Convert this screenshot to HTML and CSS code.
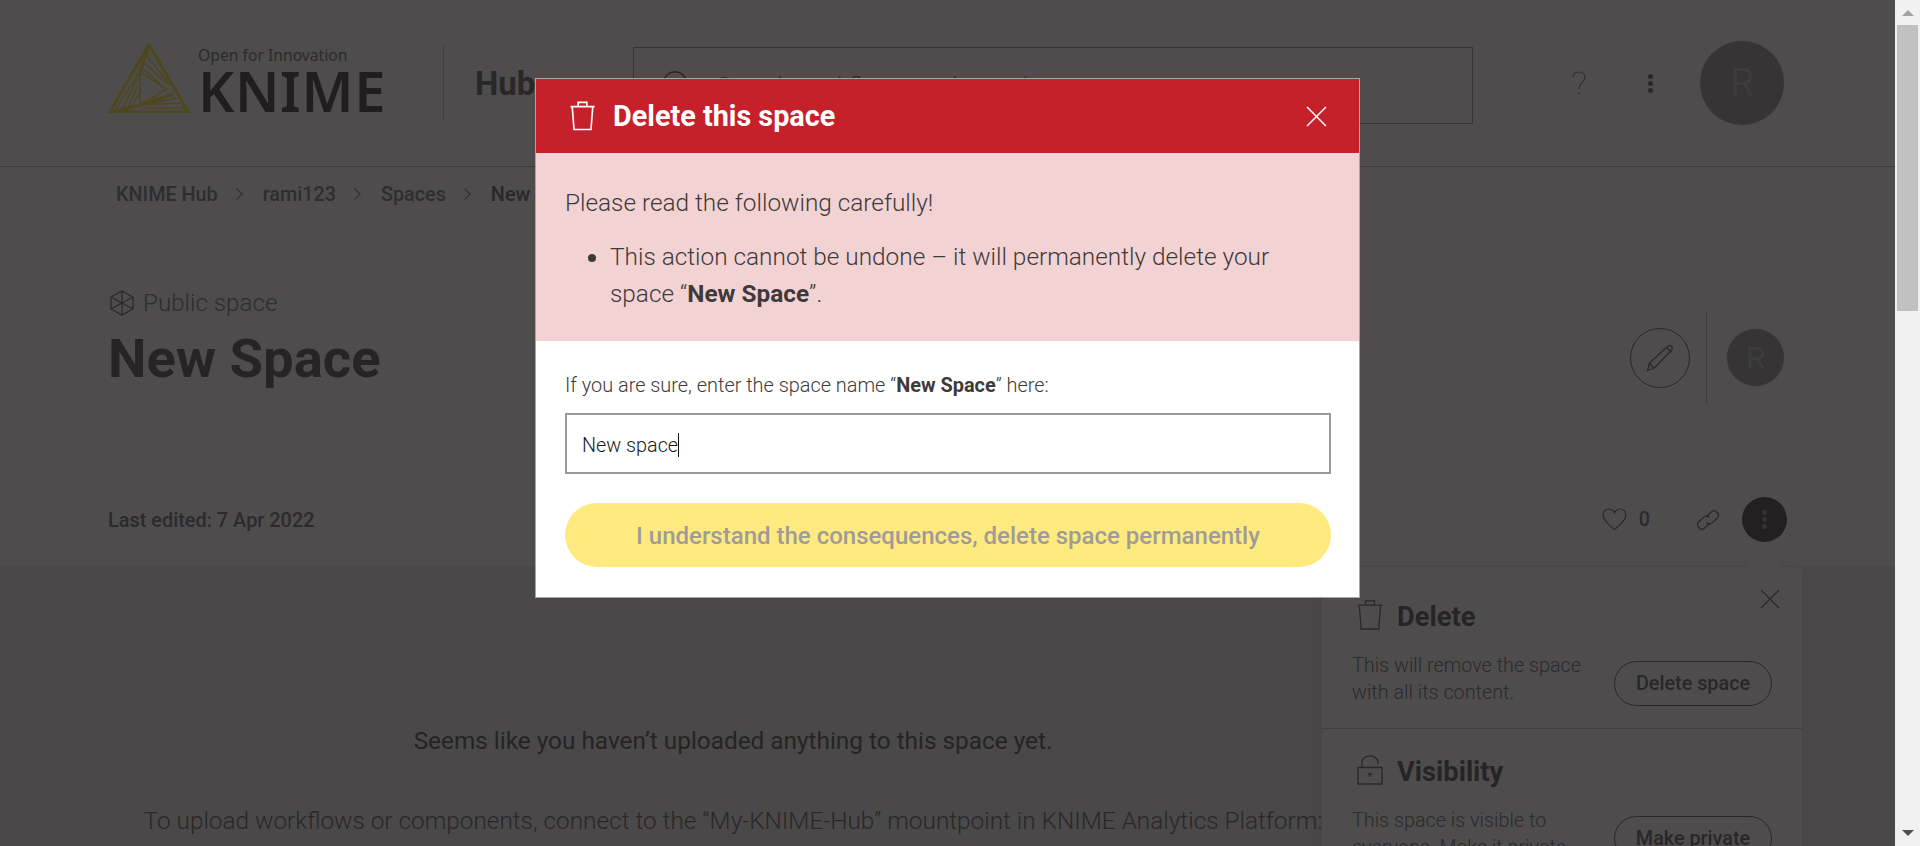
FILE: index.html
```html
<!DOCTYPE html>
<html lang="en">
<head>
<meta charset="utf-8">
<title>New Space – KNIME Hub</title>
<link rel="stylesheet" href="styles.css">
</head>
<body>
<div class="app">
  <div class="page">
    <header class="topbar">
      <div class="logo">
        <svg class="logo-mark" viewBox="0 0 82 70" fill="none">
          <g class="logo-lines">
            <path class="logo-frame" d="M41 1.500 1.800 69h78.400z"/>
            <path class="logo-frame" d="M41 1.500 32 29M5 69 32 62 66 51"/>
            <path d="M32 29 59 46 32 62zM31 30 6 69M29 36 13 69M29 44 18 69M31 50 23 66M38 12 63 43M36 19 59 41M34 25 53 42M33 62 69 55M33 62 73 60M34 65 76 65"/>
          </g>
        </svg>
        <div class="logo-text">
          <span class="logo-tag">Open for Innovation</span>
          <span class="logo-name">KNIME</span>
        </div>
      </div>
      <span class="top-divider"></span>
      <span class="hub">Hub</span>
      <div class="search">
        <svg class="search-icon" viewBox="0 0 30 30" fill="none"><circle cx="12" cy="12" r="11.300"/><path d="m20 20 9 9"/></svg>
        <span class="search-text">Search workflows, nodes and more…</span>
      </div>
      <svg class="help" viewBox="0 0 14 24" fill="none"><path d="M1 6.500C1 3 3.500 1 7 1s6 2.200 6 5.500c0 2.400-1.300 3.700-3 5.300-1.800 1.700-2.900 3-2.900 6"/><circle class="fill" cx="7" cy="22.500" r="1"/></svg>
      <div class="kebab"><i></i><i></i><i></i></div>
      <div class="avatar avatar-big">R</div>
    </header>

    <nav class="crumbs">
      <a>KNIME Hub</a><span class="chev"></span>
      <a>rami123</a><span class="chev"></span>
      <a>Spaces</a><span class="chev"></span>
      <a class="current">New Space</a>
    </nav>

    <section class="title-block">
      <div class="title-left">
        <div class="kind">
          <svg class="cube" viewBox="0 0 24 26" fill="none"><path d="M12 1 23 7v12l-11 6L1 19V7zM12 1v12M1 7l11 6 11-6M1 19l11-6 11 6M12 13v12"/></svg>
          <span>Public space</span>
        </div>
        <h1>New Space</h1>
      </div>
      <div class="title-actions">
        <button class="edit" type="button">
          <svg viewBox="0 0 28 28" fill="none"><path d="M1.500 26.500 3.500 19 21.500 2.500c1.300-1.200 3-1.100 4 0s1 2.800-.2 4L8 24.300zM3.500 19 8 24.300M20.500 3.500l5 4.500"/></svg>
        </button>
        <span class="action-divider"></span>
        <div class="avatar avatar-small">R</div>
      </div>
    </section>

    <section class="meta">
      <span class="edited">Last edited: 7 Apr 2022</span>
      <div class="meta-actions">
        <svg class="heart" viewBox="0 0 26 24" fill="none"><path d="M13 22.500C8 18 1 13 1 7.200 1 3.500 3.700 1 7 1c2.700 0 4.800 1.500 6 4 1.200-2.500 3.300-4 6-4 3.300 0 6 2.500 6 6.200C25 13 18 18 13 22.500z"/></svg>
        <span class="count">0</span>
        <svg class="chain" viewBox="0 0 26 22" fill="none"><path d="M11 8 16.500 2.800a3.600 3.600 0 0 1 5 0l1 .9a3.500 3.500 0 0 1 0 5L17 14a3.600 3.600 0 0 1-5 0l-.5-.5"/><path d="M15 14 9.500 19.200a3.600 3.600 0 0 1-5 0l-1-.9a3.500 3.500 0 0 1 0-5L9 8a3.600 3.600 0 0 1 5 0l.5.5"/></svg>
        <div class="more"><i></i><i></i><i></i></div>
      </div>
    </section>

    <section class="empty">
      <p class="empty-lead">Seems like you haven’t uploaded anything to this space yet.</p>
      <p class="empty-help">To upload workflows or components, connect to the “My-KNIME-Hub” mountpoint in KNIME Analytics Platform:</p>
    </section>

    <aside class="popover">
      <svg class="popover-close" viewBox="0 0 20 20" fill="none"><path d="m1 1 18 18M19 1 1 19"/></svg>
      <div class="pop-section">
        <h2>
          <svg class="pop-icon" viewBox="0 0 26 30" fill="none"><path d="M8.500 5V.8h9V5M.5 5.200h25M2.300 5.200 4.200 29h17.600l1.900-23.800"/></svg>
          <span>Delete</span>
        </h2>
        <div class="pop-body">
          <p>This will remove the space with all its content.</p>
          <button class="pill" type="button">Delete space</button>
        </div>
      </div>
      <div class="pop-section">
        <h2>
          <svg class="pop-icon" viewBox="0 0 26 30" fill="none"><path d="M1 12.500h24V29H1zM5 12V7.500C5 3.500 8.500.8 13 .8s8 2.700 8 6.700v1.500M11 19h4M13 19v3"/></svg>
          <span>Visibility</span>
        </h2>
        <div class="pop-body">
          <p>This space is visible to everyone. Make it private</p>
          <button class="pill" type="button">Make private</button>
        </div>
      </div>
    </aside>

    <div class="overlay">
      <div class="modal" role="dialog">
        <header class="modal-head">
          <svg class="modal-trash" viewBox="0 0 26 30" fill="none"><path d="M8.500 5V.8h9V5M.5 5.200h25M2.300 5.200 4.200 29h17.600l1.900-23.800"/></svg>
          <h2>Delete this space</h2>
          <svg class="modal-close" viewBox="0 0 20 20" fill="none"><path d="m1 1 18 18M19 1 1 19"/></svg>
        </header>
        <div class="modal-warning">
          <p>Please read the following carefully!</p>
          <ul>
            <li>This action cannot be undone – it will permanently delete your space “<strong>New Space</strong>”.</li>
          </ul>
        </div>
        <div class="modal-form">
          <label>If you are sure, enter the space name “<strong>New Space</strong>” here:</label>
          <div class="field"><span>New space</span><span class="caret"></span></div>
          <button class="confirm" type="button">I understand the consequences, delete space permanently</button>
        </div>
      </div>
    </div>
  </div>
  <div class="scrollbar">
    <span class="arrow-up"></span>
    <span class="thumb"></span>
    <span class="arrow-down"></span>
  </div>
</div>
</body>
</html>
```

FILE: styles.css
```css
* { box-sizing: border-box; }
html, body { margin: 0; height: 846px; overflow: hidden; }
body { font-family: Roboto, "Liberation Sans", sans-serif; color: #3e3a39; background: #fff; }
h1, h2, p, ul { margin: 0; padding: 0; }
button { font-family: inherit; background: none; padding: 0; }

.app { display: flex; height: 846px; }
.page { position: relative; flex: 1; min-width: 0; overflow: hidden; background: #fff; }

/* top bar */
.topbar { display: flex; align-items: center; height: 167px; padding-left: 108px; border-bottom: 1px solid #a8a8a8; }
.logo { display: flex; gap: 8px; width: 275px; height: 72px; margin-top: -10px; }
.logo-mark { width: 82px; height: 70px; margin-top: 1px; flex: none; }
.logo-lines { stroke: #ffdc00; stroke-width: 1.600; }
.logo-lines .logo-frame { stroke-width: 3; }
.logo-text { display: flex; flex-direction: column; }
.logo-tag { font-family: "Noto Sans", sans-serif; font-size: 15.700px; line-height: 20px; margin-top: 3px; color: #4a4a4a; white-space: nowrap; }
.logo-name { font-family: "Noto Sans", sans-serif; font-weight: 600; font-size: 56px; line-height: 50px; letter-spacing: .7px; color: #0e0e0e; }
.top-divider { width: 1px; height: 75px; margin: 0 0 0 60px; background: #a8a8a8; }
.hub { margin: 0 0 0 31px; width: 158px; font-weight: 700; font-size: 33px; color: #3e3a39; }
.search { display: flex; align-items: center; width: 840px; height: 77px; margin-top: 5px; padding-left: 29px; border: 1px solid #7c7c7c; }
.search-icon { width: 30px; height: 30px; stroke: #3e3a39; stroke-width: 1.500; }
.search-text { margin: 0 0 0 24px; font-weight: 300; font-size: 24.300px; color: #555; }
.help { width: 14px; height: 24px; margin: 0 0 0 99px; stroke: #5a5a5a; stroke-width: 1.200; }
.help .fill { fill: #5a5a5a; stroke: none; }
.kebab { display: flex; flex-direction: column; gap: 2px; margin: 0 0 0 62px; }
.kebab i { width: 5px; height: 5px; border-radius: 50%; background: #3e3a39; }
.avatar { display: flex; align-items: center; justify-content: center; border-radius: 50%; background: #7e7e7e; color: #a8a8a8; box-shadow: 0 0 3px rgba(0,0,0,.12); }
.avatar-big { width: 84px; height: 84px; margin: 0 0 0 47px; font-size: 39px; }

/* breadcrumb */
.crumbs { display: flex; align-items: center; height: 54px; padding-left: 116px; font-weight: 500; font-size: 19.800px; color: #5e5e5e; white-space: nowrap; }
.chev { width: 8px; height: 8px; margin: 0 22px 0 15px; border-top: 1px solid #555; border-right: 1px solid #555; transform: rotate(45deg); }
.current { color: #3e3a39; }

/* title */
.title-block { display: flex; justify-content: space-between; height: 252px; padding: 68px 111px 0 110px; }
.kind { display: flex; align-items: center; gap: 9px; height: 28px; font-weight: 300; font-size: 24.200px; color: #5a5a5a; }
.cube { width: 24px; height: 26px; stroke: #3e3a39; stroke-width: 1.200; }
h1 { margin: 10px 0 0 -2px; font-weight: 700; font-size: 54.500px; line-height: 62px; color: #2f2c2b; }
.title-actions { display: flex; align-items: center; height: 93px; margin-top: 22px; }
.edit { display: flex; align-items: center; justify-content: center; width: 60px; height: 60px; border: 1px solid #3e3a39; border-radius: 50%; }
.edit svg { width: 28px; height: 28px; stroke: #3e3a39; stroke-width: 1.300; }
.action-divider { width: 1px; height: 93px; margin: 0 20px 0 16px; background: #a8a8a8; }
.avatar-small { width: 57px; height: 57px; font-size: 32px; }

/* meta row */
.meta { display: flex; justify-content: space-between; align-items: center; height: 93px; padding: 0 108px 0 108px; }
.edited { margin-top: 2px; font-weight: 500; font-size: 19.900px; color: #4e4e4e; }
.meta-actions { display: flex; align-items: center; }
.heart { width: 25px; height: 23px; stroke: #3e3a39; stroke-width: 1.200; }
.count { margin: 0 45px 0 12px; font-weight: 500; font-size: 19.800px; color: #4e4e4e; }
.chain { width: 26px; height: 22px; margin-right: 21px; stroke: #3e3a39; stroke-width: 1.200; }
.more { display: flex; flex-direction: column; align-items: center; justify-content: center; gap: 2px; width: 45px; height: 45px; border-radius: 50%; background: #1b1a18; }
.more i { width: 5px; height: 5px; border-radius: 50%; background: #777; }

/* empty state */
.empty { height: 400px; padding: 156px 537px 0 108px; background: #e9e9e9; text-align: center; white-space: nowrap; font-size: 24.350px; }
.empty-lead { line-height: 38px; font-weight: 400; color: #2a2827; }
.empty-help { margin-top: 42px; line-height: 38px; font-weight: 300; color: #3e3a39; }

/* popover */
.popover { position: absolute; top: 567px; left: 1322px; width: 480px; background: #fff; box-shadow: 0 0 16px rgba(0,0,0,.15); }
.popover::before { content: ""; position: absolute; top: -19px; left: 422px; width: 40px; height: 20px; background: #fff; clip-path: polygon(50% 0, 100% 100%, 0 100%); }
.popover-close { position: absolute; top: 22px; left: 438px; width: 20px; height: 20px; stroke: #3e3a39; stroke-width: 1.200; }
.pop-section { padding: 33px 30px 22px; border-bottom: 1px solid #b8b8b8; }
.pop-section + .pop-section { padding-top: 26px; border-bottom: 0; }
.pop-section h2 { display: flex; align-items: center; gap: 14px; height: 30px; padding-left: 5px; font-weight: 700; font-size: 27.300px; color: #2f2c2b; }
.pop-section h2 span { margin-top: 3px; }
.pop-icon { width: 26px; height: 30px; stroke: #3e3a39; stroke-width: 1.300; flex: none; }
.pop-body { display: flex; justify-content: space-between; align-items: flex-start; margin-top: 21px; }
.pop-body p { width: 240px; margin-top: 1px; font-weight: 300; font-size: 19.800px; line-height: 27px; color: #4a4a4a; }
.pill { width: 158px; height: 45px; margin-top: 10px; border: 1px solid #3e3a39; border-radius: 23px; font-weight: 500; font-size: 19.800px; color: #3e3a39; white-space: nowrap; }

/* modal */
.overlay { position: absolute; inset: 0; display: flex; justify-content: center; padding-top: 78px; background: rgba(37,35,36,.813); }
.modal { width: 825px; height: 520px; border: 1px solid rgba(255,255,255,.5); background: #fff; background-clip: padding-box; }
.modal-head { display: flex; align-items: center; height: 74px; padding: 0 32px 0 34px; background: #c6202a; color: #fff; }
.modal-trash { width: 25px; height: 30px; stroke: #fff; stroke-width: 1.700; flex: none; }
.modal-head h2 { flex: 1; margin-left: 18px; font-weight: 700; font-size: 28.800px; }
.modal-close { width: 21px; height: 21px; stroke: #fff; stroke-width: 1.400; }
.modal-warning { height: 188px; padding: 31px 30px 0 29px; background: #f3d2d4; font-weight: 300; font-size: 24.350px; line-height: 37px; color: #3e3a39; }
.modal-warning ul { margin-top: 17px; padding: 0 50px 0 45px; }
.modal-warning strong, .modal-form strong { font-weight: 700; }
.modal-form { padding: 29px 28px 0 29px; }
.modal-form label { display: block; height: 32px; font-weight: 300; font-size: 19.900px; line-height: 32px; color: #3e3a39; }
.field { display: flex; align-items: center; height: 61px; margin-top: 11px; padding: 3px 15px 0; border: 2px solid #999; font-weight: 300; font-size: 19.800px; color: #1a1a1a; }
.caret { width: 1px; height: 24px; background: #111; }
.confirm { display: block; width: 100%; height: 64px; margin-top: 29px; padding-top: 2px; border: 0; border-radius: 32px; background: #ffea80; font-weight: 500; font-size: 24px; color: #9f9c96; }

/* scrollbar */
.scrollbar { position: relative; flex: none; width: 25px; background: #f1f1f1; }
.thumb { position: absolute; top: 25px; left: 2px; width: 21px; height: 286px; background: #c1c1c1; }
.arrow-up, .arrow-down { position: absolute; left: 7px; width: 0; height: 0; border-left: 6px solid transparent; border-right: 6px solid transparent; }
.arrow-up { top: 10px; border-bottom: 6px solid #a3a3a3; }
.arrow-down { top: 830px; border-top: 6px solid #505050; }
```
